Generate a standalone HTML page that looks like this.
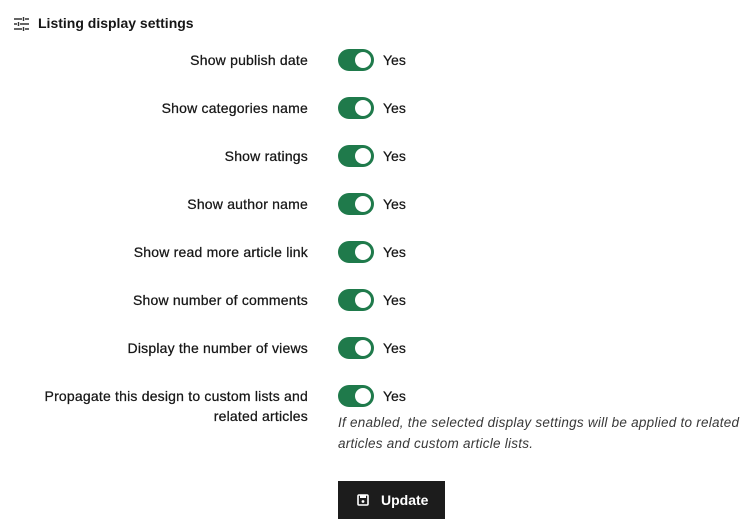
<!DOCTYPE html>
<html><head><style>
body{margin:0;width:747px;height:529px;background:#fff;font-family:"Liberation Sans",sans-serif;color:#161616;position:relative;overflow:hidden}
.h{position:absolute;left:38px;top:15px;font-size:14px;font-weight:bold}
.ic{position:absolute;left:14px;top:17px}
.lab{position:absolute;right:439px;font-size:14px;text-align:right;line-height:20px;letter-spacing:0.2px;-webkit-text-stroke:0.25px #161616}
.tg{position:absolute;left:338px;width:36px;height:22px;border-radius:11px;background:#1f7a4b}
.tg:after{content:"";position:absolute;right:3px;top:3px;width:16px;height:16px;border-radius:50%;background:#fff}
.y{position:absolute;left:383px;font-size:14px;line-height:20px;-webkit-text-stroke:0.25px #161616}
.help{position:absolute;left:338px;top:412px;font-size:13.5px;font-style:italic;line-height:21px;color:#393939;width:410px;letter-spacing:0.25px}
.btn{position:absolute;left:338px;top:481px;width:107px;height:38px;background:#1c1c1c;color:#fff;font-size:14px;font-weight:bold}
</style></head><body>
<svg class="ic" width="15" height="14" viewBox="0 0 15 14" stroke="#333" stroke-width="1.4" fill="none"><path d="M0 2h8M11 2h4M9.5 0v4M0 7h3M6 7h9M4.5 5v4M0 12h8M11 12h4M9.5 10v4"/></svg>
<div class="h">Listing display settings</div>

<div class="lab" style="top:50px">Show publish date</div><div class="tg" style="top:49px"></div><div class="y" style="top:50px">Yes</div>
<div class="lab" style="top:98px">Show categories name</div><div class="tg" style="top:97px"></div><div class="y" style="top:98px">Yes</div>
<div class="lab" style="top:146px">Show ratings</div><div class="tg" style="top:145px"></div><div class="y" style="top:146px">Yes</div>
<div class="lab" style="top:194px">Show author name</div><div class="tg" style="top:193px"></div><div class="y" style="top:194px">Yes</div>
<div class="lab" style="top:242px">Show read more article link</div><div class="tg" style="top:241px"></div><div class="y" style="top:242px">Yes</div>
<div class="lab" style="top:290px">Show number of comments</div><div class="tg" style="top:289px"></div><div class="y" style="top:290px">Yes</div>
<div class="lab" style="top:338px">Display the number of views</div><div class="tg" style="top:337px"></div><div class="y" style="top:338px">Yes</div>
<div class="lab" style="top:386px">Propagate this design to custom lists and<br>related articles</div><div class="tg" style="top:385px"></div><div class="y" style="top:386px">Yes</div>
<div class="help">If enabled, the selected display settings will be applied to related articles and custom article lists.</div>
<div class="btn">
<svg style="position:absolute;left:19px;top:13px" width="12" height="12" viewBox="0 0 12 12"><rect x="1" y="1" width="10" height="10" rx="1" fill="none" stroke="#fff" stroke-width="1.6"/><rect x="3" y="1" width="6" height="3" fill="#fff"/><circle cx="6" cy="7.5" r="1.4" fill="#fff"/></svg>
<span style="position:absolute;left:43px;top:11px">Update</span></div>
</body></html>
